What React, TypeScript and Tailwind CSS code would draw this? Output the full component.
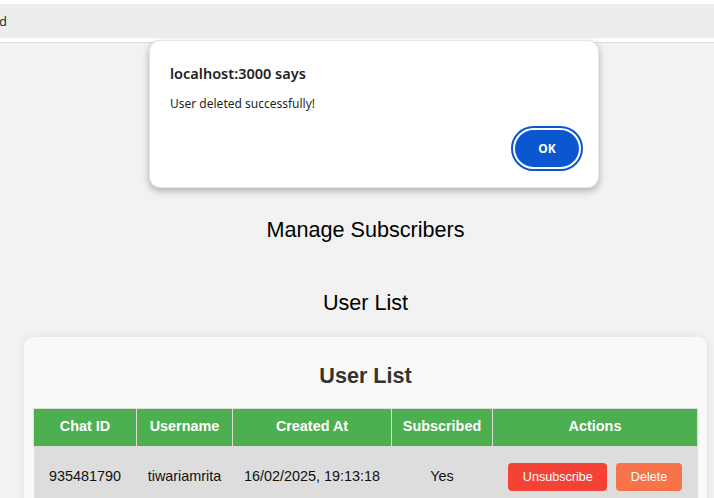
import React from "react";

export default function App() {
  const arial = { fontFamily: '"Liberation Sans", Arial, sans-serif' } as React.CSSProperties;
  return (
    <div className="relative w-[714px] h-[498px] overflow-hidden bg-[#f2f2f2]">
      {/* top browser strip */}
      <div className="h-[4px] bg-white" />
      <div className="h-[34px] bg-[#eeedee] flex items-center">
        <span className="ml-[-1px] text-[13px] text-[#333] font-['Noto_Sans',sans-serif] leading-none">d</span>
      </div>
      <div className="h-[5px] bg-white border-b border-[#dcdcdc]" />

      {/* page content */}
      <div style={arial} className="w-[683px] ml-[24px]">
        <div className="mt-[174px] h-[25px] leading-[25px] text-center text-[21.6px] text-black">Manage Subscribers</div>
        <div className="mt-[48px] h-[25px] leading-[25px] text-center text-[21.6px] text-black">User List</div>
        <div className="mt-[21.5px] bg-[#f9f9f9] rounded-[9px] shadow-[0_0_9px_rgba(0,0,0,0.08)] px-[9px] pt-[26.5px] pb-[20px]">
          <div className="h-[25px] leading-[25px] text-center text-[21.6px] font-bold text-[#333]">User List</div>
          <table className="mt-[19.5px] w-[664px] table-fixed border-collapse text-[14.4px]">
            <colgroup>
              <col className="w-[103px]" />
              <col className="w-[96px]" />
              <col className="w-[159px]" />
              <col className="w-[101px]" />
              <col className="w-[205px]" />
            </colgroup>
            <thead>
              <tr className="bg-[#4caf50] text-white h-[38px]">
                <th className="border border-[#dddddd] font-bold text-center p-0">Chat ID</th>
                <th className="border border-[#dddddd] font-bold text-center p-0">Username</th>
                <th className="border border-[#dddddd] font-bold text-center p-0">Created At</th>
                <th className="border border-[#dddddd] font-bold text-center p-0">Subscribed</th>
                <th className="border border-[#dddddd] font-bold text-center p-0">Actions</th>
              </tr>
            </thead>
            <tbody>
              <tr className="bg-[#dddddd] text-[#111] h-[62px]">
                <td className="text-center align-middle p-0">935481790</td>
                <td className="text-center align-middle p-0">tiwariamrita</td>
                <td className="text-center align-middle p-0">16/02/2025, 19:13:18</td>
                <td className="text-center align-middle p-0">Yes</td>
                <td className="text-center align-middle p-0">
                  <div className="flex justify-center gap-[9px]">
                    <button className="h-[28px] px-[14.5px] rounded-[4px] bg-[#f44336] text-white text-[12.6px] leading-none">Unsubscribe</button>
                    <button className="h-[28px] px-[14.5px] rounded-[4px] bg-[#f8734a] text-white text-[12.6px] leading-none">Delete</button>
                  </div>
                </td>
              </tr>
            </tbody>
          </table>
        </div>
      </div>

      {/* alert dialog */}
      <div className="absolute left-[149px] top-[40px] w-[450px] h-[148px] bg-white rounded-[11px] border border-[#e4e4e4] shadow-[0_3px_7px_rgba(0,0,0,0.28)] font-['Noto_Sans',sans-serif]">
        <div className="absolute left-[20px] top-[22px] text-[14.5px] font-semibold text-[#1f1f1f] leading-[20px]">localhost:3000 says</div>
        <div className="absolute left-[20px] top-[55px] text-[12px] text-[#1f1f1f] leading-[16px]">User deleted successfully!</div>
        <div className="absolute left-[361px] top-[85px] w-[72px] h-[45px] rounded-full border-2 border-[#0b57d0] p-[2px]">
          <div className="w-full h-full rounded-full bg-[#0b57d0] flex items-center justify-center text-white text-[12px] font-bold">OK</div>
        </div>
      </div>
    </div>
  );
}
